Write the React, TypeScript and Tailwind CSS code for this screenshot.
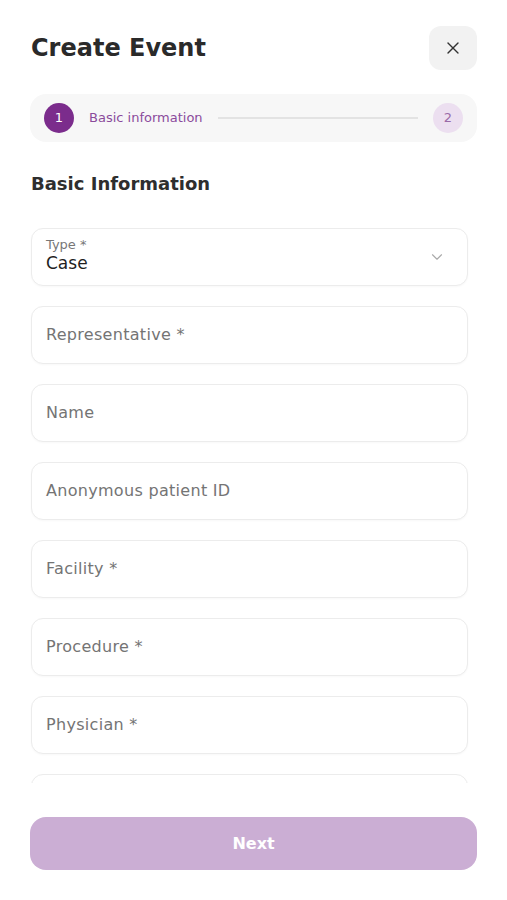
import React from 'react';
import { X, ChevronDown } from 'lucide-react';

const fields = [
  'Representative *',
  'Name',
  'Anonymous patient ID',
  'Facility *',
  'Procedure *',
  'Physician *',
  '',
];

export default function App() {
  return (
    <div
      className="flex h-[900px] w-full flex-col bg-white text-[#222]"
      style={{ fontFamily: '"DejaVu Sans", "Open Sans", sans-serif' }}
    >
      {/* Header */}
      <div className="flex items-center justify-between pl-[31px] pr-[30px] pt-[26px]">
        <h1 className="text-[24px] font-bold leading-[44px] text-[#2a2a2a]">Create Event</h1>
        <button className="flex h-[44px] w-[48px] items-center justify-center rounded-xl bg-[#f2f2f2]">
          <X size={20} strokeWidth={1.6} className="text-[#333]" />
        </button>
      </div>

      {/* Stepper */}
      <div className="mx-[30px] mt-[24px] flex h-[48px] items-center gap-[15px] rounded-2xl bg-[#f7f7f7] px-[14px]">
        <div className="flex h-[30px] w-[30px] shrink-0 items-center justify-center rounded-full bg-[#7b2c8c] text-[13px] text-white">
          1
        </div>
        <span className="shrink-0 text-[13px] text-[#8b4b9c]">Basic information</span>
        <div className="h-[2px] flex-1 bg-[#e3e3e3]" />
        <div className="flex h-[30px] w-[30px] shrink-0 items-center justify-center rounded-full bg-[#ecdff0] text-[13px] text-[#9a6aa8]">
          2
        </div>
      </div>

      {/* Scrollable form */}
      <div className="mt-[30px] flex-1 overflow-hidden pl-[31px] pr-[39px]">
        <h2 className="text-[18px] font-bold leading-[24px] text-[#2e2e2e]">Basic Information</h2>
        <div className="mt-[32px] flex flex-col gap-[20px] pb-[4px]">
          <div className="flex h-[58px] items-center justify-between rounded-xl border border-[#ececec] bg-white px-[14px] shadow-[0_1px_2px_rgba(0,0,0,0.03)]">
            <div className="-mt-[2px] flex flex-col">
              <span className="text-[13px] leading-[14px] text-[#777]">Type *</span>
              <span className="text-[17px] leading-[22px] text-[#1f1f1f]">Case</span>
            </div>
            <ChevronDown size={18} strokeWidth={1.5} className="mr-[7px] text-[#aaa]" />
          </div>
          {fields.map((f, i) => (
            <div
              key={i}
              className="flex h-[58px] shrink-0 items-center rounded-xl border border-[#ececec] bg-white px-[14px] shadow-[0_1px_2px_rgba(0,0,0,0.03)]"
            >
              <span className="text-[16px] tracking-[0.3px] text-[#747474]">{f}</span>
            </div>
          ))}
        </div>
      </div>

      {/* Footer */}
      <div className="px-[30px] pb-[30px] pt-[34px]">
        <button className="flex h-[53px] w-full items-center justify-center rounded-2xl bg-[#cbaed4] text-[16px] font-bold text-white">
          Next
        </button>
      </div>
    </div>
  );
}
